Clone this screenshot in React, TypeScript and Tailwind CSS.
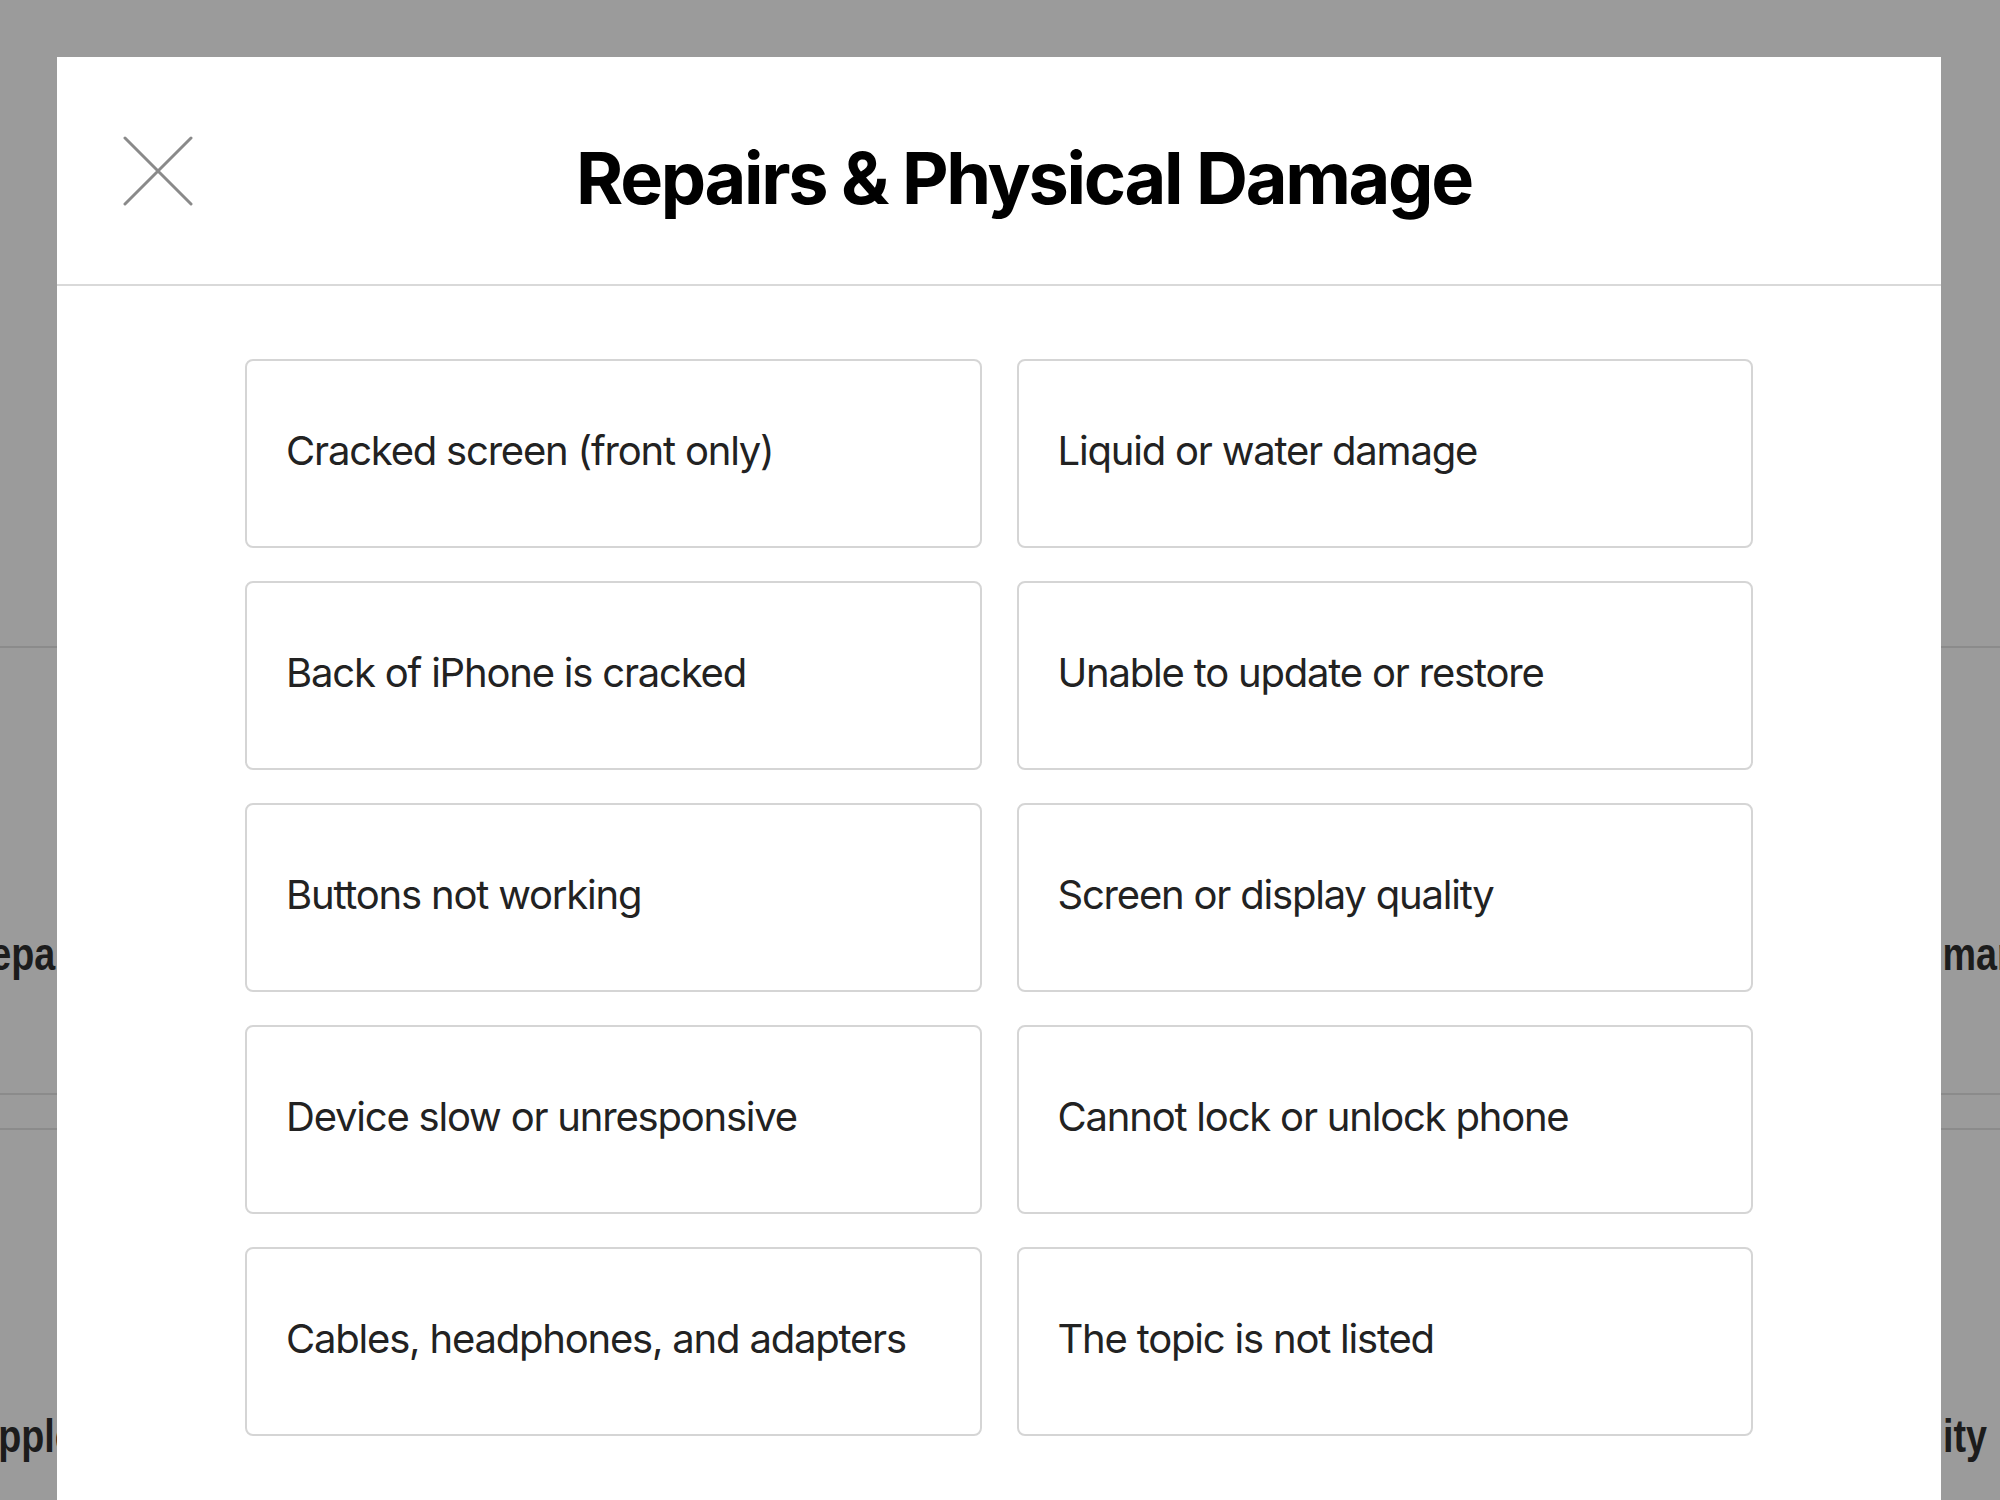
import React from "react";

const topics = [
    "Cracked screen (front only)",
    "Liquid or water damage",
    "Back of iPhone is cracked",
    "Unable to update or restore",
    "Buttons not working",
    "Screen or display quality",
    "Device slow or unresponsive",
    "Cannot lock or unlock phone",
    "Cables, headphones, and adapters",
    "The topic is not listed",
];

function CloseIcon() {
    return (
        <svg width="70" height="70" viewBox="0 0 70 70" fill="none">
            <path d="M2 2 L68 68 M68 2 L2 68" stroke="#8a8a8a" strokeWidth="3" strokeLinecap="round" />
        </svg>
    );
}

function TopicCard({ label }: { label: string }) {
    return (
        <button className="flex h-[189px] items-center rounded-[8px] border-2 border-[#d5d5d5] bg-white pb-[5px] pl-[39px] text-left">
            <span
                className="text-[40px] leading-none tracking-[-0.03em] text-[#222222]"
                style={{ fontFamily: "Inter, 'Noto Sans', sans-serif" }}
            >
                {label}
            </span>
        </button>
    );
}

export default function App() {
    return (
        <div className="relative h-[1500px] w-[2000px] overflow-hidden bg-[#9b9b9b]" style={{ fontFamily: "'Liberation Sans', Arial, sans-serif" }}>
            {/* page behind the overlay */}
            <div className="h-[646px]" />
            <div className="h-[2px] bg-[#8b8b8b]" />
            <div className="flex h-[445px] items-start pt-[276px] text-[46px] font-bold leading-[60px] text-[#1c1c1c]">
                <span className="-ml-[37px] inline-block origin-left scale-x-[0.82]">Repairs</span>
                <div className="flex-1" />
                <span className="-mr-[33px] inline-block origin-right scale-x-[0.82]">Summary</span>
            </div>
            <div className="h-[2px] bg-[#8b8b8b]" />
            <div className="h-[33px]" />
            <div className="h-[2px] bg-[#8b8b8b]" />
            <div className="flex items-start pt-[276px] text-[46px] font-bold leading-[60px] text-[#1c1c1c]">
                <span className="-ml-[29px] inline-block origin-left scale-x-[0.82]">Apple</span>
                <div className="flex-1" />
                <span className="mr-[13px] inline-block origin-right scale-x-[0.82]">Quality</span>
            </div>

            {/* modal */}
            <div className="absolute bottom-0 left-[57px] top-[57px] w-[1884px] bg-white">
                <div className="flex h-[227px] items-center pl-[66px]">
                    <CloseIcon />
                    <h1
                        className="mt-[14px] flex-1 pr-[86px] text-center text-[72px] font-bold leading-none tracking-[-0.032em] text-black"
                        style={{ fontFamily: "Inter, 'Liberation Sans', sans-serif" }}
                    >
                        Repairs &amp; Physical Damage
                    </h1>
                </div>
                <div className="h-[2px] bg-[#d9d9d9]" />
                <div className="mx-auto mt-[73px] grid w-[1508px] grid-cols-2 gap-x-[35px] gap-y-[33px]">
                    {topics.map((t) => (
                        <TopicCard key={t} label={t} />
                    ))}
                </div>
            </div>
        </div>
    );
}
